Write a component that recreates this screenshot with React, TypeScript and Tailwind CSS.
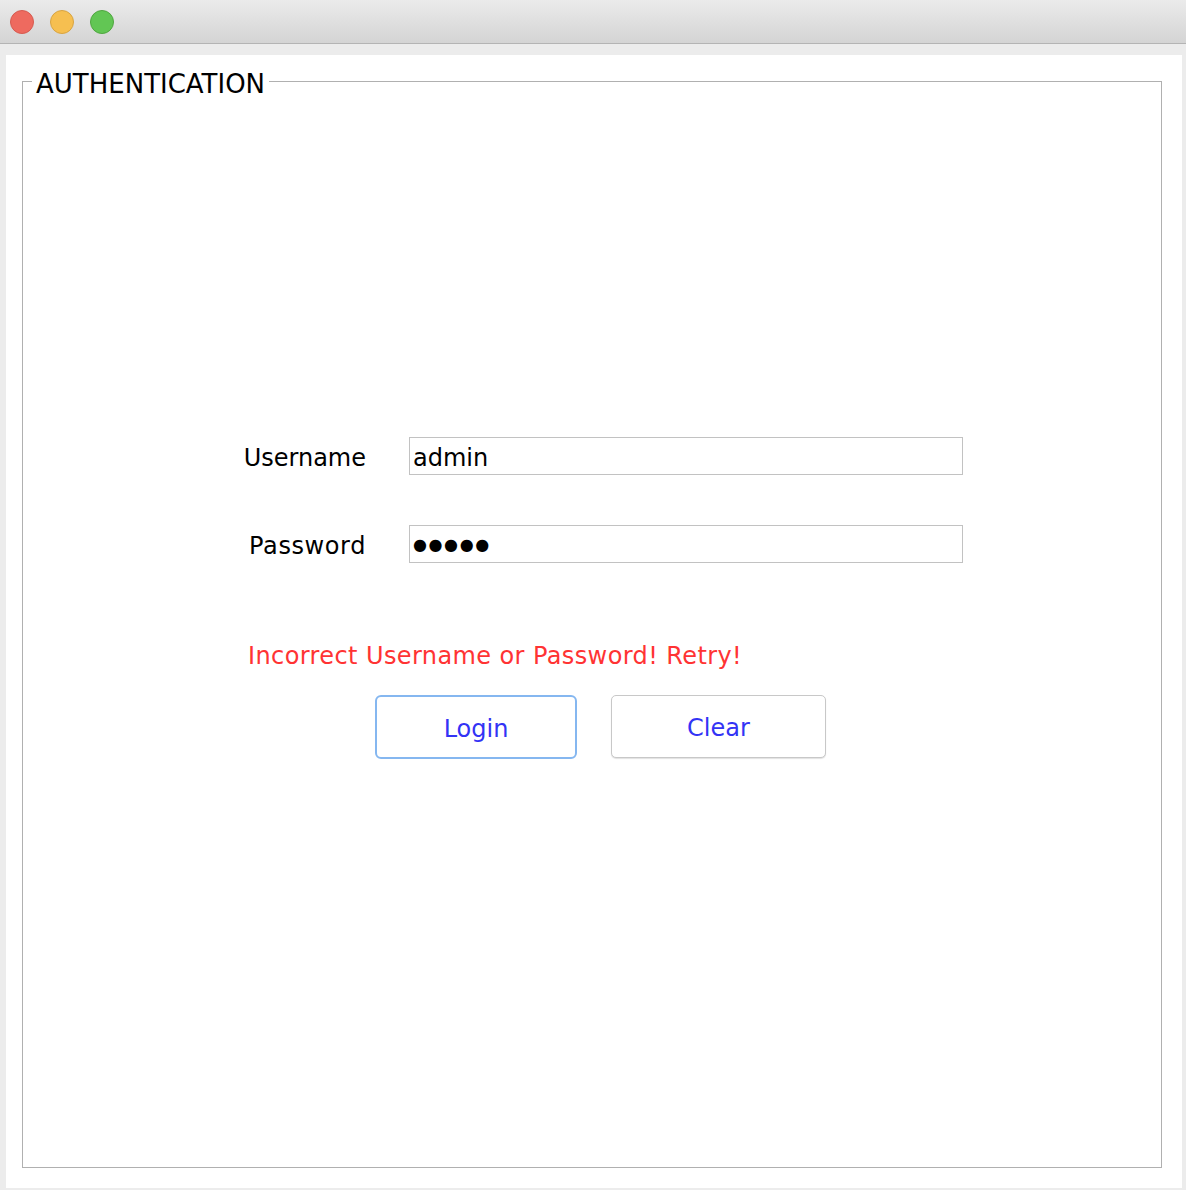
export default function App() {
  const font = { fontFamily: '"DejaVu Sans", "Liberation Sans", sans-serif' }

  return (
    <div className="flex h-[1190px] w-[1186px] flex-col bg-[#ececec]" style={font}>
      {/* window title bar */}
      <div className="flex h-[44px] items-center gap-[16px] border-b border-[#b4b4b4] bg-gradient-to-b from-[#ebebeb] to-[#d4d4d4] pl-[10px]">
        <span className="h-[24px] w-[24px] rounded-full border border-[#d65b50] bg-[#ee6a5f]" />
        <span className="h-[24px] w-[24px] rounded-full border border-[#d8a442] bg-[#f6bf50]" />
        <span className="h-[24px] w-[24px] rounded-full border border-[#50a640] bg-[#62c654]" />
      </div>

      <div className="flex flex-1 flex-col pb-[2px] pl-[6px] pr-[4px] pt-[11px]">
        <div className="flex flex-1 flex-col bg-white pb-[20px] pl-[16px] pr-[20px] pt-[11px]">
          <fieldset className="flex-1 border border-[#b0b0b0] p-0">
            <legend className="ml-[9px] px-[4px] text-[26px] leading-[30px] text-black">
              <span className="relative top-[3px]">AUTHENTICATION</span>
            </legend>

            <div className="flex flex-col pt-[341px]">
              <div className="flex flex-col gap-[50px] pl-[200px]">
                <div className="flex items-center">
                  <label className="w-[143px] pt-[4px] text-right text-[24px] leading-[30px] text-black">Username</label>
                  <div className="ml-[43px] flex h-[38px] w-[554px] items-center border border-[#c2c2c2] pl-[3px] pt-[4px] text-[24px] leading-[30px] text-black">
                    admin
                  </div>
                </div>
                <div className="flex items-center">
                  <label className="w-[143px] pt-[4px] text-right text-[24px] leading-[30px] tracking-[0.6px] text-black">Password</label>
                  <div className="ml-[43px] flex h-[38px] w-[554px] items-center border border-[#c2c2c2] pl-[3px] pt-[2px] text-[16px] leading-[30px] tracking-[1.6px] text-black">
                    ●●●●●
                  </div>
                </div>
              </div>

              <p className="ml-[225px] mt-[78px] text-[24px] leading-[30px] tracking-[0.4px] text-[#ff3333]">
                Incorrect Username or Password! Retry!
              </p>

              <div className="ml-[352px] mt-[24px] flex gap-[34px]">
                <button className="h-[64px] w-[202px] rounded-[6px] border-2 border-[#85b7f0] bg-white pt-[3px] text-[24px] text-[#3333f5]">
                  Login
                </button>
                <button className="h-[63px] w-[215px] rounded-[5px] border border-[#c8c8c8] bg-white pt-[3px] text-[24px] text-[#3333f5] shadow-[0_1px_1px_rgba(0,0,0,0.12)]">
                  Clear
                </button>
              </div>
            </div>
          </fieldset>
        </div>
      </div>
    </div>
  )
}
